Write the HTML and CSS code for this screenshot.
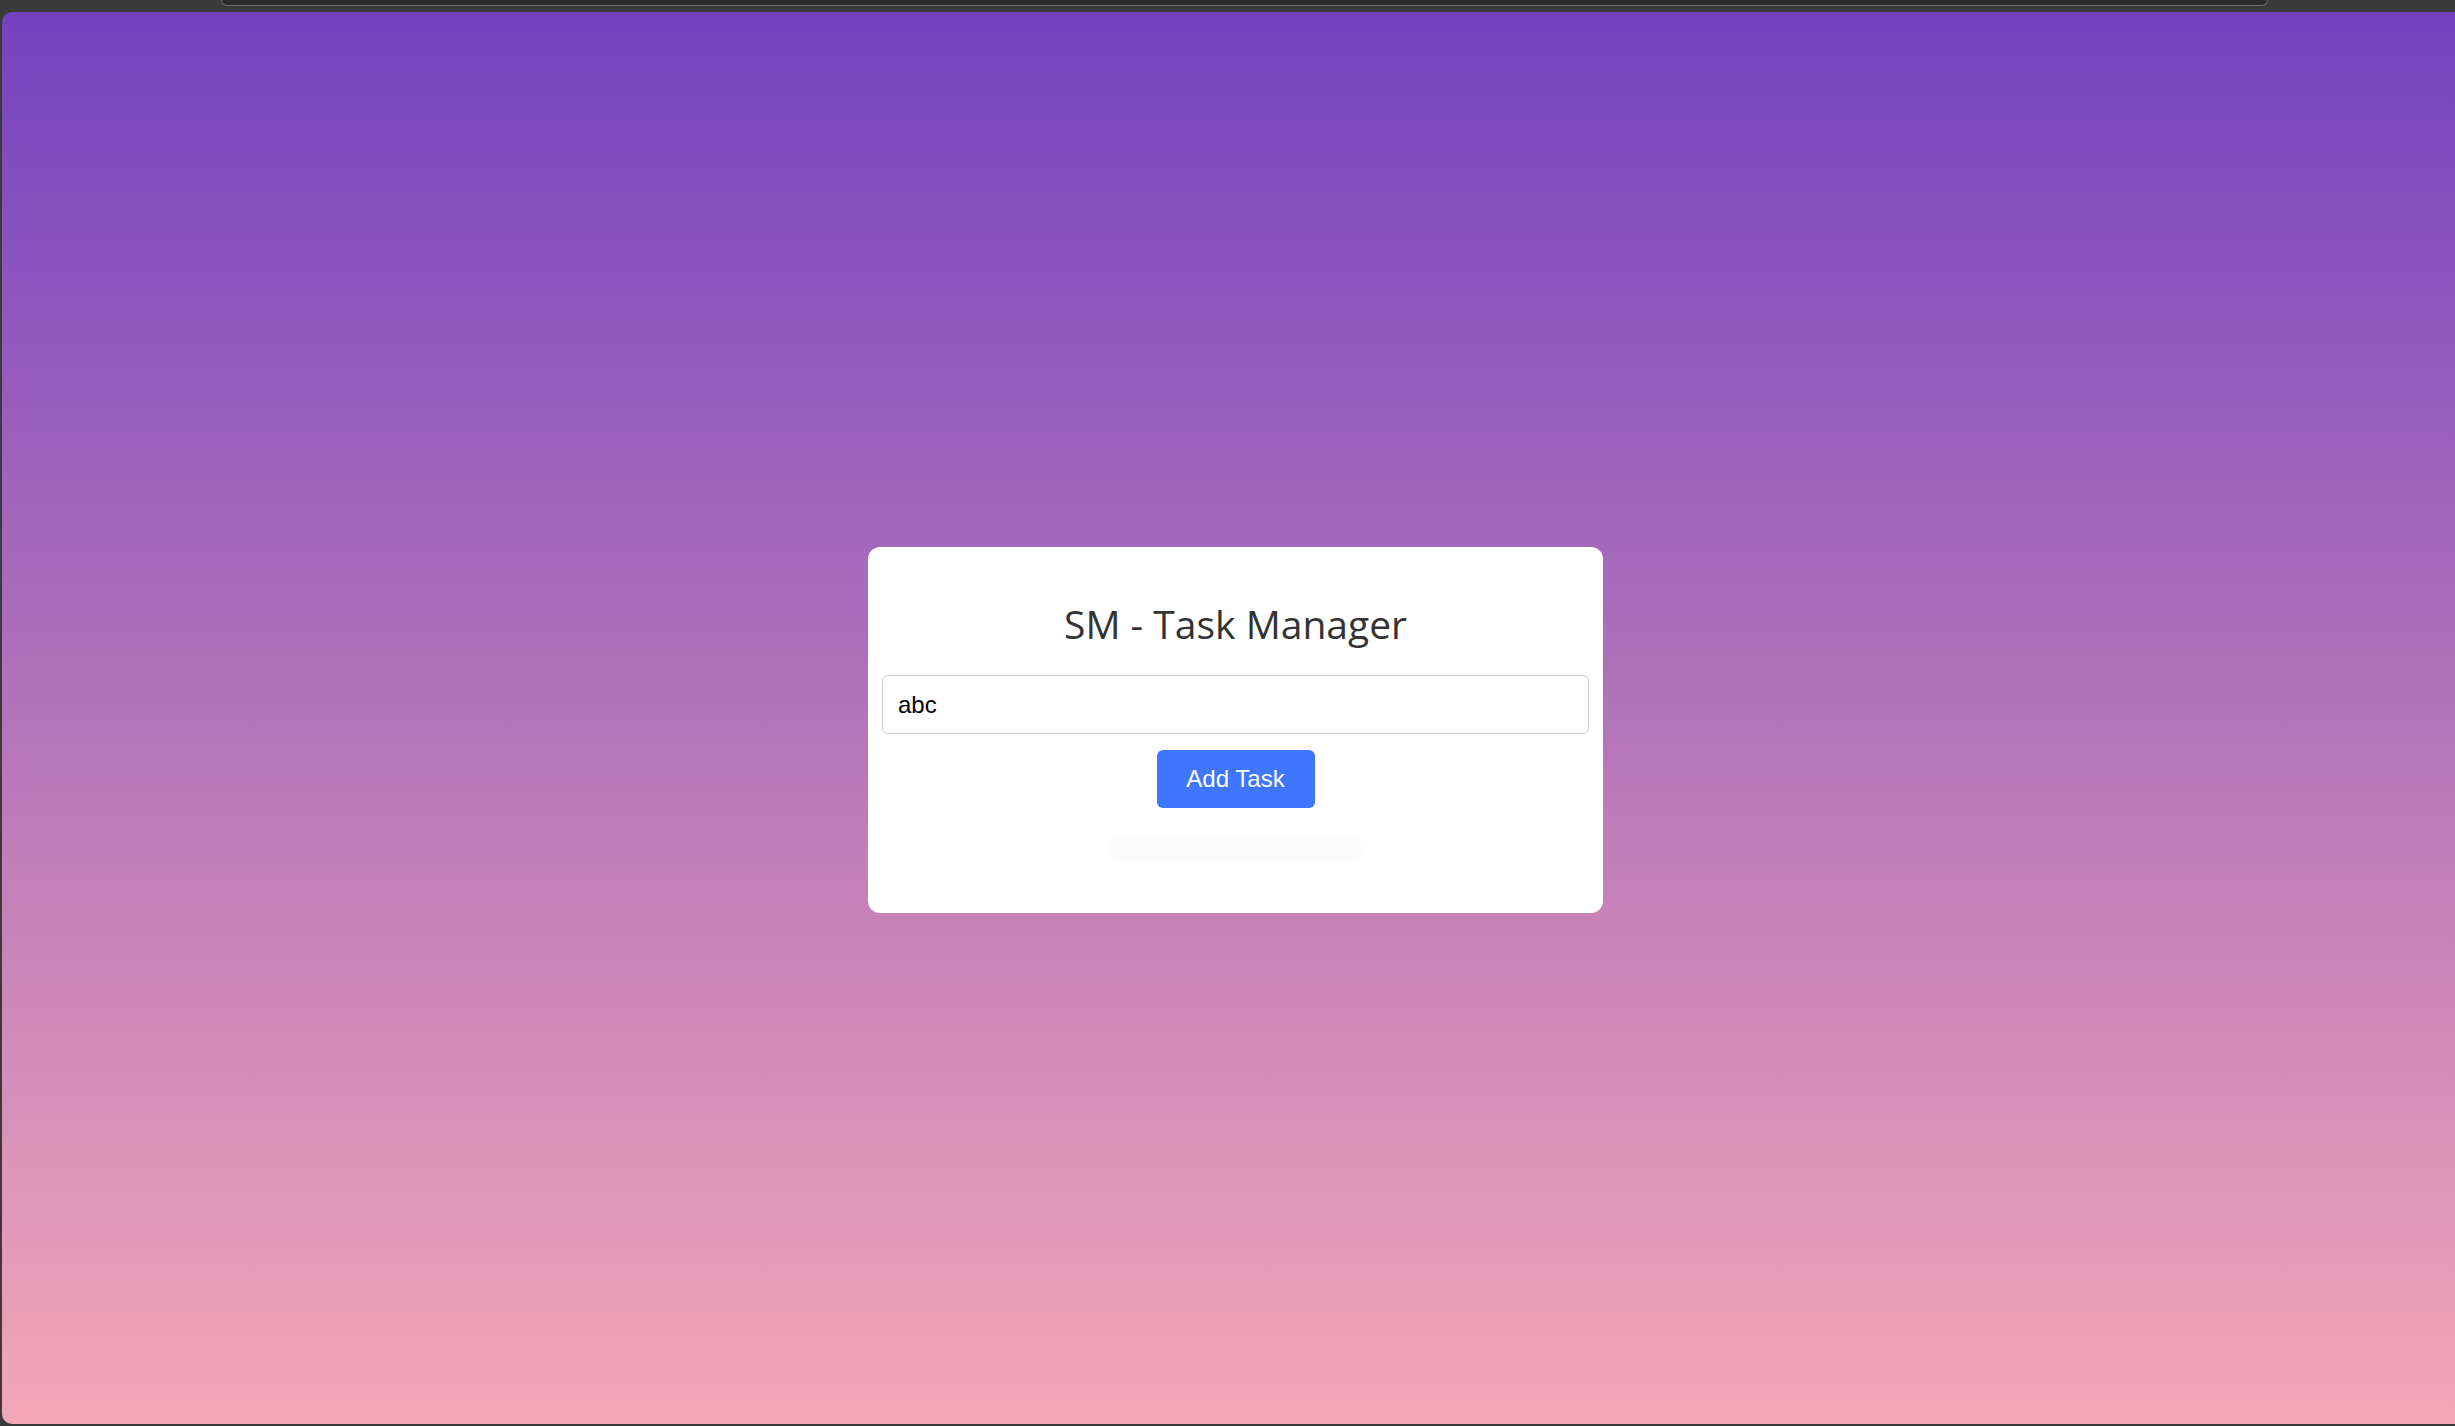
FILE: index.html
```html
<!DOCTYPE html>
<html lang="en">
<head>
<meta charset="utf-8">
<title>SM - Task Manager</title>
<link rel="stylesheet" href="styles.css">
</head>
<body>
  <div class="topbar"><div class="tabstrip"></div></div>
  <main class="frame">
    <section class="card">
      <h1 class="title">SM - Task Manager</h1>
      <input class="task-input" type="text" value="abc">
      <button class="add-btn" type="button">Add Task</button>
      <div class="task-list"></div>
    </section>
  </main>
</body>
</html>
```

FILE: styles.css
```css
* { box-sizing: border-box; }
html, body { margin: 0; padding: 0; }
body {
  background: #3a3a3a;
  width: 2455px;
  height: 1426px;
  overflow: hidden;
  display: flex;
  flex-direction: column;
}
.topbar {
  height: 12px;
  padding: 0 187px 0 221px;
  flex: none;
}
.tabstrip {
  height: 6px;
  background: #2b2b2b;
  border: 1px solid #6a6a6a;
  border-top: none;
  border-radius: 0 0 10px 10px;
}
.frame {
  flex: 1;
  margin: 0 0 2px 2px;
  border-radius: 10px 0 0 10px;
  background: linear-gradient(to bottom, #7442bf 0%, #b474ba 50%, #f4a7b6 100%);
  display: flex;
  align-items: center;
  justify-content: center;
  padding: 24px 0 0 14px;
}
.card {
  width: 735px;
  background: #ffffff;
  border-radius: 12px;
  padding: 14px 14px 50px;
  display: flex;
  flex-direction: column;
  align-items: center;
}
.title {
  margin: 37px 0 0;
  font-family: "Open Sans", "Noto Sans", sans-serif;
  font-weight: 500;
  font-size: 39px;
  color: #333333;
  line-height: 52px;
}
.task-input {
  margin-top: 25px;
  width: 100%;
  height: 59px;
  border: 1px solid #cccccc;
  border-radius: 6px;
  padding: 0 15px;
  font-family: "Liberation Sans", Arial, sans-serif;
  font-size: 24px;
  color: #000000;
  background: #ffffff;
  outline: none;
}
.add-btn {
  margin-top: 16px;
  width: 158px;
  height: 58px;
  border: none;
  border-radius: 6px;
  background: #3e76fe;
  color: #ffffff;
  font-family: "Liberation Sans", Arial, sans-serif;
  font-size: 24px;
  padding: 0;
}
.task-list {
  margin-top: 29px;
  width: 253px;
  height: 26px;
  background: #fbfbfb;
  border-radius: 10px;
  filter: blur(3px);
}
```
